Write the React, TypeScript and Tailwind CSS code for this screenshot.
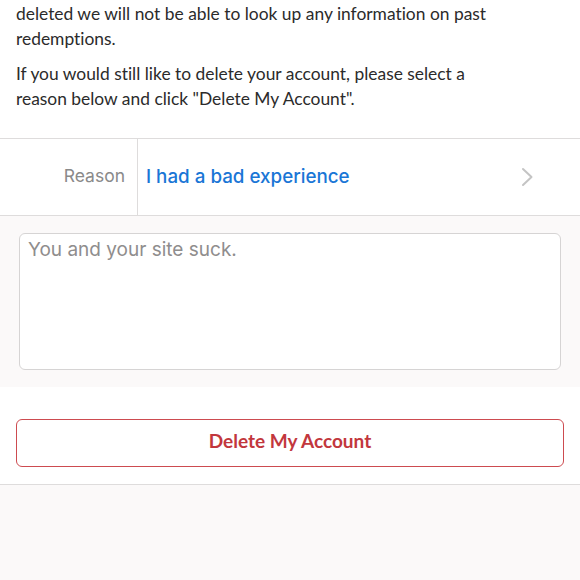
export default function App() {
  return (
    <div className="w-[580px] h-[580px] overflow-hidden bg-[#fbf9f9]">
      <div className="bg-white pl-4 pr-[66px] pt-[1px] pb-[27px] font-['Lato',sans-serif] text-[17.4px] leading-[25px] text-[#2b2b2b] [font-variant-ligatures:none]">
        <p>deleted we will not be able to look up any information on past redemptions.</p>
        <p className="mt-[10px]">
          If you would still like to delete your account, please select a reason below and click "Delete My Account".
        </p>
      </div>

      <div className="flex h-[78px] bg-white border-y border-[#dedcdc] font-['Inter',sans-serif]">
        <div className="w-[138px] border-r border-[#dedcdc] flex items-center justify-end pr-[12px] pb-[2px] text-[17.5px] text-[#8a8a8a]">
          Reason
        </div>
        <div className="flex-1 flex items-center justify-between pl-[8px] pr-[46px]">
          <span className="text-[18.8px] font-medium text-[#1a76d6]">I had a bad experience</span>
          <svg width="13" height="20" viewBox="0 0 13 20" fill="none">
            <path d="M2 2l8.5 8-8.5 8" stroke="#c4c4c4" strokeWidth="2" strokeLinecap="round" strokeLinejoin="round" />
          </svg>
        </div>
      </div>

      <div className="px-[19px] pt-[17px] pb-[17px]">
        <textarea
          placeholder="You and your site suck."
          className="block w-full h-[137px] resize-none rounded-[6px] border border-[#d6d4d4] bg-white px-[8px] py-[4px] font-['Inter',sans-serif] text-[19px] leading-[24px] text-[#333] placeholder:text-[#8f8d8d] outline-none"
        />
      </div>

      <div className="bg-white px-4 pt-[32px] pb-[17px] border-b border-[#dedcdc]">
        <button className="w-full h-[48px] pb-[3px] rounded-[6px] border-[1.5px] border-[#cd4b50] bg-white font-['Lato',sans-serif] text-[19px] font-bold text-[#c2373d] [font-variant-ligatures:none]">
          Delete My Account
        </button>
      </div>
    </div>
  );
}
